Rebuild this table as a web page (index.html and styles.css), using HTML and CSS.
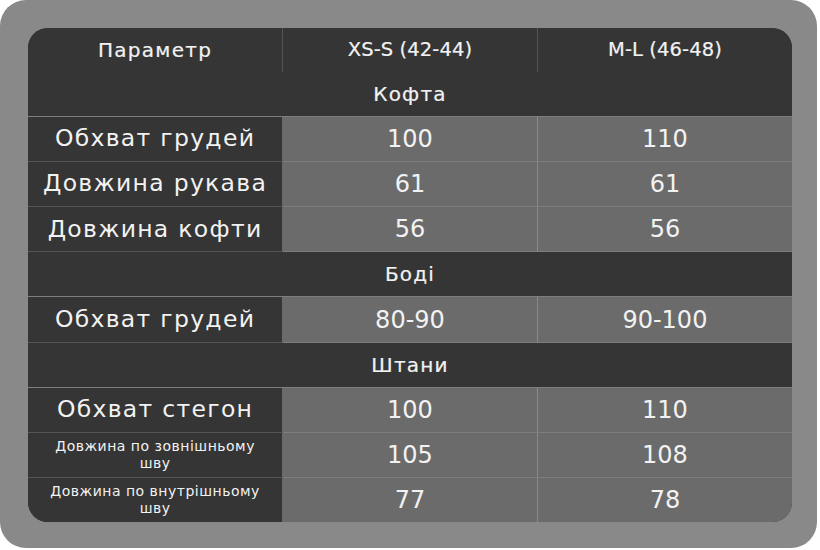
FILE: index.html
```html
<!DOCTYPE html>
<html lang="uk">
<head>
<meta charset="utf-8">
<link rel="stylesheet" href="styles.css">
</head>
<body>
<div class="card">
  <div class="table-wrap">
    <table class="sizes">
      <thead>
        <tr>
          <th>Параметр</th>
          <th class="size">XS-S (42-44)</th>
          <th class="size">M-L (46-48)</th>
        </tr>
      </thead>
      <tbody>
        <tr class="section"><td colspan="3">Кофта</td></tr>
        <tr><th>Обхват грудей</th><td>100</td><td>110</td></tr>
        <tr><th>Довжина рукава</th><td>61</td><td>61</td></tr>
        <tr><th>Довжина кофти</th><td>56</td><td>56</td></tr>
        <tr class="section"><td colspan="3">Боді</td></tr>
        <tr><th>Обхват грудей</th><td>80-90</td><td>90-100</td></tr>
        <tr class="section"><td colspan="3">Штани</td></tr>
        <tr><th>Обхват стегон</th><td>100</td><td>110</td></tr>
        <tr><th class="small">Довжина по зовнішньому<br>шву</th><td>105</td><td>108</td></tr>
        <tr><th class="small">Довжина по внутрішньому<br>шву</th><td>77</td><td>78</td></tr>
      </tbody>
    </table>
  </div>
</div>
</body>
</html>
```

FILE: styles.css
```css
html, body {
  margin: 0;
  padding: 0;
  background: #ffffff;
}

body {
  width: 820px;
  height: 550px;
  font-family: "DejaVu Sans", "Open Sans", sans-serif;
  color: #f2f2f2;
}

.card {
  width: 817px;
  height: 548px;
  background: #898989;
  border-radius: 26px;
  padding: 28px 26px 26px 28px;
  box-sizing: border-box;
}

.table-wrap {
  width: 764px;
  height: 494px;
  border-radius: 20px;
  overflow: hidden;
  background: #353535;
}

.sizes {
  width: 100%;
  height: 100%;
  border-collapse: collapse;
  table-layout: fixed;
}

.sizes th,
.sizes td {
  height: 44px;
  padding: 0;
  text-align: center;
  vertical-align: middle;
  border: 1px solid #555555;
  font-weight: 400;
  line-height: 1;
}

.sizes tr:first-child th,
.sizes tr:first-child td { border-top: none; }
.sizes tr:last-child th,
.sizes tr:last-child td { border-bottom: none; }
.sizes th:first-child,
.sizes td:first-child { border-left: none; }
.sizes th:last-child,
.sizes td:last-child { border-right: none; }

.sizes thead th {
  background: #353535;
  font-size: 20px;
  letter-spacing: 1.3px;
  -webkit-text-stroke: 0.2px #f2f2f2;
}

.sizes thead th.size {
  font-size: 19.5px;
  letter-spacing: 0.1px;
}

.sizes .section td {
  background: #353535;
  font-size: 20px;
  letter-spacing: 1.2px;
  -webkit-text-stroke: 0.2px #f2f2f2;
}

.sizes tbody th {
  background: #353535;
  font-size: 23.5px;
  letter-spacing: 1.3px;
}

.sizes tbody th.small {
  font-size: 14px;
  line-height: 17px;
  letter-spacing: 0.5px;
}

.sizes tbody td {
  background: #6b6b6b;
  font-size: 24px;
  border-color: #7e7e7e #8a8a8a #7e7e7e #8a8a8a;
}

.sizes tbody tr:not(.section) th {
  border-right: 1px solid #6b6b6b;
}
```
